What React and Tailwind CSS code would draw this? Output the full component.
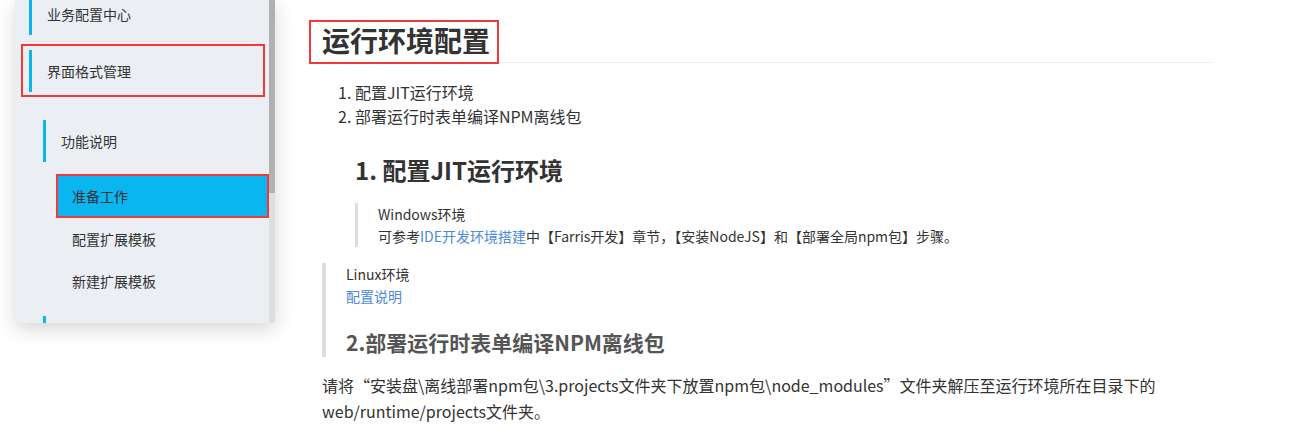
import React from "react";

const font = { fontFamily: '"Noto Sans CJK SC", "Noto Sans", sans-serif' };

function NavItem({ label, bar, indent, className = "" }) {
  return (
    <div className={`flex shrink-0 items-center h-[42px] ${className}`}>
      {bar && <div className="w-[3px] h-[42px] shrink-0 bg-[#0bb5ef]" />}
      <span className={`text-[14px] text-[#333] ${indent}`}>{label}</span>
    </div>
  );
}

function Sidebar() {
  return (
    <div className="w-[290px] shrink-0 pl-[15px]">
      <div className="relative flex w-[260px] h-[323px] bg-[#ebeef3] shadow-[0_6px_18px_rgba(0,0,0,0.16)] overflow-hidden">
        <div className="flex-1 flex flex-col">
          <NavItem label="业务配置中心" bar indent="ml-[15px]" className="-mt-[7px] pl-[14px]" />

          <div className="shrink-0 mt-[9px] ml-[6px] w-[244px] h-[53px] border-2 border-[#f03a3a] pl-[6px] pt-[4px]">
            <NavItem label="界面格式管理" bar indent="ml-[15px]" />
          </div>

          <NavItem label="功能说明" bar indent="ml-[15px]" className="mt-[23px] pl-[28px]" />

          <div className="shrink-0 mt-[12px] ml-[41px] h-[44px] bg-[#0bb5ef] border-2 border-[#f03a3a] flex items-center">
            <span className="ml-[14px] text-[14px] text-[#333]">准备工作</span>
          </div>
          <NavItem label="配置扩展模板" indent="ml-[57px]" />
          <NavItem label="新建扩展模板" indent="ml-[57px]" />

          <div className="shrink-0 mt-[14px] ml-[28px] w-[3px] h-[20px] bg-[#0bb5ef]" />
        </div>
        <div className="w-[6px] flex flex-col bg-[#dedede]">
          <div className="h-[193px] bg-[#b0b0b0]" />
        </div>
      </div>
    </div>
  );
}

function Content() {
  return (
    <div className="w-[902px] ml-[20px] text-[#333]">
      <div className="pt-[22px] border-b border-[#eeeeee]">
        <h1 className="inline-block ml-[1px] h-[40px] pl-[11px] pr-[7px] text-[28px] leading-[36px] font-bold text-[#333] outline-2 outline-[#f03a3a]">
          运行环境配置
        </h1>
      </div>

      <ol className="mt-[17px] ml-[28px] text-[16px] leading-[24px]">
        <li>1. 配置JIT运行环境</li>
        <li>2. 部署运行时表单编译NPM离线包</li>
      </ol>

      <h2 className="mt-[24px] ml-[45px] text-[24px] leading-[36px] font-bold text-[#333]">
        1. 配置JIT运行环境
      </h2>

      <div className="mt-[15px] ml-[45px] border-l-[3px] border-[#dddddd] pl-[20px] text-[14px] leading-[22px]">
        <p>Windows环境</p>
        <p>
          可参考<span className="text-[#4a89dc]">IDE开发环境搭建</span>中【Farris开发】章节，【安装NodeJS】和【部署全局npm包】步骤。
        </p>
      </div>

      <div className="mt-[16px] ml-[12px] border-l-4 border-[#dddddd] pl-[20px] text-[14px] leading-[22px]">
        <p>Linux环境</p>
        <p className="text-[#4a89dc]">配置说明</p>
        <h3 className="mt-[20px] text-[21px] leading-[30px] font-bold text-[#555]">
          2.部署运行时表单编译NPM离线包
        </h3>
      </div>

      <p className="mt-[15px] ml-[12px] text-[16px] leading-[26px] whitespace-nowrap">
        请将“安装盘\离线部署npm包\3.projects文件夹下放置npm包\node_modules”文件夹解压至运行环境所在目录下的
        <br />
        web/runtime/projects文件夹。
      </p>
    </div>
  );
}

export default function App() {
  return (
    <div className="w-[1289px] h-[434px] bg-white flex overflow-hidden" style={font}>
      <Sidebar />
      <Content />
    </div>
  );
}
